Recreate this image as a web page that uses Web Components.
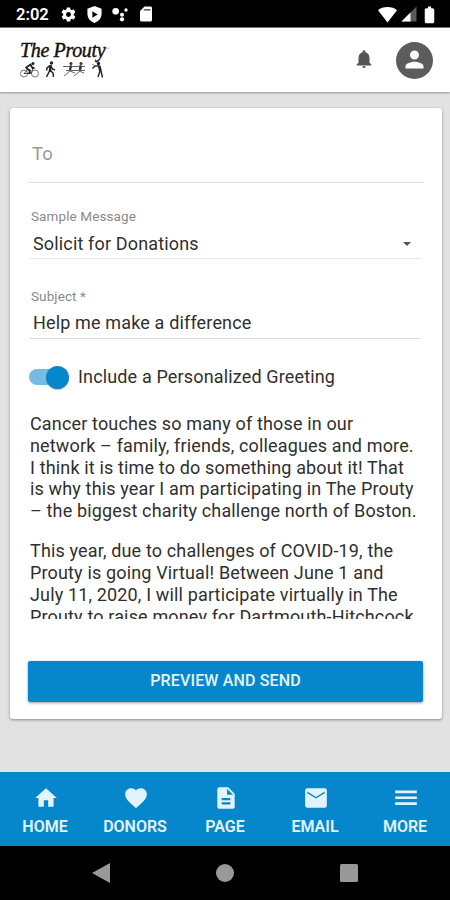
<!DOCTYPE html>
<html lang="en">
<head>
<meta charset="utf-8">
<title>The Prouty</title>
<style>
body {
  margin: 0;
  background: #e2e2e2;
  font-family: Roboto, "Liberation Sans", sans-serif;
  color: #2f2f2f;
}
</style>
</head>
<body>
<prouty-app>
  <status-bar slot="top" time="2:02"></status-bar>
  <app-header slot="top">The Prouty</app-header>

  <message-card>
    <form-field kind="empty">To</form-field>
    <form-field kind="select" label="Sample Message">Solicit for Donations</form-field>
    <form-field kind="input" label="Subject *">Help me make a difference</form-field>
    <toggle-switch>Include a Personalized Greeting</toggle-switch>
    <message-body>
      <p>Cancer touches so many of those in our<br>network – family, friends, colleagues and more.<br>I think it is time to do something about it! That<br>is why this year I am participating in The Prouty<br>– the biggest charity challenge north of Boston.</p>
      <p>This year, due to challenges of COVID-19, the<br>Prouty is going Virtual! Between June 1 and<br>July 11, 2020, I will participate virtually in The<br>Prouty to raise money for Dartmouth-Hitchcock</p>
    </message-body>
    <send-button>PREVIEW AND SEND</send-button>
  </message-card>

  <tab-bar slot="bottom">
    <tab-item icon="home">HOME</tab-item>
    <tab-item icon="heart">DONORS</tab-item>
    <tab-item icon="page">PAGE</tab-item>
    <tab-item icon="mail">EMAIL</tab-item>
    <tab-item icon="menu">MORE</tab-item>
  </tab-bar>
  <system-nav slot="bottom"></system-nav>
</prouty-app>

<script>
const icons = {
  gear: `<path d="M19.4 13a7.500 7.500 0 0 0 0-2l2.100-1.650a.5.5 0 0 0 .1-.640l-2-3.460a.5.5 0 0 0-.6-.220l-2.500 1a7.300 7.300 0 0 0-1.700-1l-.370-2.650A.5.5 0 0 0 14 2h-4a.5.5 0 0 0-.5.400L9.130 5.070a7.700 7.700 0 0 0-1.700 1l-2.480-1a.5.5 0 0 0-.6.220l-2 3.460a.5.5 0 0 0 .1.640L4.570 11a8 8 0 0 0 0 2l-2.100 1.650a.5.5 0 0 0-.1.640l2 3.460c.1.220.4.300.6.220l2.480-1c.5.400 1.100.700 1.700 1l.370 2.650c0 .2.200.4.500.4h4c.2 0 .4-.2.500-.4l.370-2.650a7.300 7.300 0 0 0 1.700-1l2.480 1c.2.100.5 0 .6-.220l2-3.460a.5.5 0 0 0-.1-.640zM12 15.500a3.500 3.500 0 1 1 0-7 3.500 3.500 0 0 1 0 7z"/>`,
  shield: `<path fill-rule="evenodd" d="M12 0 2 4v7c0 6 4.300 11 10 13 5.700-2 10-7 10-13V4zM9 7.500l7.500 4.500L9 16.500z"/>`,
  dots: `<circle cx="5.500" cy="8" r="5"/><circle cx="15" cy="13" r="3"/><circle cx="21" cy="6" r="2.500"/><circle cx="15" cy="20" r="3.200"/>`,
  sd: `<path d="M18 2h-8L4 8v12c0 1.100.9 2 2 2h12c1.100 0 2-.9 2-2V4c0-1.100-.9-2-2-2z"/><path d="M9 6.500h9" stroke="#000" stroke-width="1.300"/>`,
  wifi: `<path d="M12 22 0 6.500C3 4 7 2.500 12 2.500S21 4 24 6.500z"/>`,
  signal: `<path opacity=".35" d="M2 22h20V2z"/><path d="M2 22h12V10z"/>`,
  battery: `<path d="M15.700 4H14V2h-4v2H8.300C7 4 6 5 6 6.300v14.400C6 22 7 23 8.300 23h7.400c1.300 0 2.300-1 2.300-2.300V6.300C18 5 17 4 15.700 4z"/>`,
  bell: `<path d="M12 22a2 2 0 0 0 2-2h-4a2 2 0 0 0 2 2zm6-6v-5c0-3.070-1.640-5.640-4.500-6.320V4a1.500 1.500 0 0 0-3 0v.680C7.630 5.360 6 7.920 6 11v5l-2 2v1h16v-1z"/>`,
  person: `<path d="M12 12a4 4 0 1 0 0-8 4 4 0 0 0 0 8zm0 2c-2.670 0-8 1.340-8 4v2h16v-2c0-2.660-5.330-4-8-4z"/>`,
  home: `<path d="M10 20v-6h4v6h5v-8h3L12 3 2 12h3v8z"/>`,
  heart: `<path d="m12 21.350-1.450-1.320C5.400 15.360 2 12.280 2 8.500 2 5.420 4.420 3 7.500 3c1.740 0 3.410.810 4.500 2.090C13.090 3.810 14.760 3 16.500 3 19.580 3 22 5.420 22 8.500c0 3.780-3.400 6.860-8.550 11.540z"/>`,
  page: `<path d="M14 2H6a2 2 0 0 0-2 2v16c0 1.100.9 2 2 2h12a2 2 0 0 0 2-2V8zm2 16H8v-2h8zm0-4H8v-2h8zm-3-5V3.500L18.500 9z"/>`,
  mail: `<path d="M20 3H4a2 2 0 0 0-2 2v14c0 1.100.9 2 2 2h16a2 2 0 0 0 2-2V5a2 2 0 0 0-2-2zm0 4.500-8 5-8-5V6l8 5 8-5z"/>`,
  menu: `<path d="M2 5h20v2.500H2zm0 5.500h20V13H2zM2 16h20v2.500H2z"/>`,
};

const svg = (name, size) =>
  `<svg width="${size}" height="${size}" viewBox="0 0 24 24" fill="currentColor">${icons[name]}</svg>`;

// attaches an open root and fills it
const render = (el, html) => {
  el.attachShadow({ mode: "open" }).innerHTML = html;
};

class ProutyApp extends HTMLElement {
  constructor() {
    super();
    render(this, `
<style>
:host { display: flex; flex-direction: column; height: 900px; width: 450px; overflow: hidden; }
main { flex: 1; padding: 16px 8px 0 10px; }
</style>
<slot name="top"></slot>
<main><slot></slot></main>
<slot name="bottom"></slot>`);
  }
}

class StatusBar extends HTMLElement {
  connectedCallback() {
    render(this, `
<style>
:host { display: flex; justify-content: space-between; align-items: center; box-sizing: border-box; height: 28px; padding: 1px 11px 0 16px; background: #000; color: #fff; border-bottom: 1px solid #777; flex: none; }
div { display: flex; align-items: center; }
svg { display: block; }
.time { font-size: 16.500px; font-weight: 600; width: 32px; margin-right: 3px; white-space: nowrap; }
.left { gap: 9px; }
.right { gap: 2px; }
.right svg:first-child { margin-right: 1px; }
</style>
<div class="left"><span class="time">${this.getAttribute("time")}</span>${svg("gear", 17)}${svg("shield", 17)}${svg("dots", 16)}${svg("sd", 18)}</div>
<div class="right">${svg("wifi", 19)}${svg("signal", 18)}${svg("battery", 19)}</div>`);
  }
}

class AppHeader extends HTMLElement {
  constructor() {
    super();
    render(this, `
<style>
:host { display: flex; align-items: center; box-sizing: border-box; height: 64px; padding: 0 17px 0 20px; background: #fff; box-shadow: 0 1px 2px rgba(0, 0, 0, 0.35); position: relative; flex: none; }
.logo { flex: 1; color: #111; padding-bottom: 2px; }
.name { font: italic 400 20px/22px "Liberation Serif", serif; letter-spacing: -0.35px; white-space: nowrap; -webkit-text-stroke: 0.4px #111; }
sup { font: 4px "Liberation Sans"; color: #888; vertical-align: 7px; letter-spacing: 0; -webkit-text-stroke: 0; }
.sports { display: block; }
.bell { display: flex; color: #555; margin-right: 21px; margin-bottom: 2px; }
.avatar { display: flex; align-items: center; justify-content: center; width: 37px; height: 37px; border-radius: 50%; background: #5c5c5c; color: #fff; }
.avatar svg { margin-bottom: 2px; }
</style>
<div class="logo">
  <div class="name"><slot></slot><sup>™</sup></div>
  <svg class="sports" width="88" height="18" viewBox="0 0 88 18" fill="none" stroke="#222" stroke-width="1.300">
    <!-- cyclist -->
    <g><circle cx="4" cy="12.500" r="3.500" stroke="#555" stroke-width=".8"/><circle cx="15" cy="12.500" r="3.500" stroke="#555" stroke-width=".8"/><path d="m4 12.500 4-4 3 4H4m7 0 2-5" stroke-width=".8"/><path stroke-width="1.800" d="m5.500 7 5-3.500 2 3.500h2M6 7l4 2.500-1 3.500"/><circle cx="13" cy="2.500" r="1.500" fill="#222" stroke="none"/></g>
    <!-- walker -->
    <g><circle cx="31.500" cy="2" r="1.700" fill="#222" stroke="none"/><path stroke-width="2.400" d="m30.500 4-.5 6"/><path stroke-width="1.500" d="m30 9-3.500 7m3.500-7 3 3 .5 4M30 4.500 27 7l-.500 2.500M31 5l1.500 3 2.500 1"/></g>
    <!-- rowers -->
    <g stroke="#666" stroke-width="1"><circle cx="51" cy="2.500" r="1.500" fill="#333" stroke="none"/><circle cx="61" cy="2.500" r="1.500" fill="#333" stroke="none"/><path d="M43 5.500h22M46 9.500h19M51 4l-1 6 5 2m5-8-1 6 5 2M50 10l-6 5m16-5-6 5"/><path stroke="#333" stroke-width="2.300" d="m51 4.500-1 4.500m11-4.500L60 9"/></g>
    <!-- golfer -->
    <g><circle cx="78.500" cy="2.500" r="1.700" fill="#222" stroke="none"/><path stroke-width="2.800" d="m79 4.500 1.500 5.500"/><path stroke-width="1.400" d="m80 10-2 6M81 10l1.500 6.500M79 5l-4 0-2.500 2.500"/><path stroke="#777" stroke-width=".8" d="m72 3.500 6 2"/></g>
  </svg>
</div>
<div class="bell">${svg("bell", 22)}</div>
<div class="avatar">${svg("person", 27)}</div>`);
  }
}

class MessageCard extends HTMLElement {
  constructor() {
    super();
    render(this, `
<style>
:host { display: flex; flex-direction: column; box-sizing: border-box; height: 611px; padding: 0 19px 0 18px; background: #fff; border-radius: 3px; box-shadow: 0 1px 3px rgba(0, 0, 0, 0.4); }
</style>
<slot></slot>`);
  }
}

class FormField extends HTMLElement {
  connectedCallback() {
    const kind = this.getAttribute("kind");
    const label = this.getAttribute("label");
    render(this, `
<style>
:host { display: flex; flex-direction: column; box-sizing: border-box; white-space: nowrap; }
:host([kind="empty"]) { height: 75px; padding: 35px 0 0 4px; border-bottom: 1px solid #ddd; color: #999; margin-bottom: 24px; }
:host([kind="select"]), :host([kind="input"]) { height: 52px; margin: 0 2px 28px; border-bottom: 1px solid #e8e8e8; }
:host([kind="input"]) { border-color: #dadada; margin-bottom: 26px; }
label { font-size: 13.500px; line-height: 18px; color: #8a8a8a; padding-left: 1px; letter-spacing: 0.1px; }
.value { display: flex; align-items: center; justify-content: space-between; font-size: 18px; letter-spacing: 0.15px; line-height: 22px; padding: 7px 9px 0 3px; }
:host([kind="select"]) .value { padding-top: 8px; }
:host([kind="empty"]) .value { padding: 0; font-size: 18.500px; }
.caret { border: 4px solid transparent; border-top-color: #555; border-bottom: 0; margin-right: 1px; }
</style>
${label ? `<label>${label}</label>` : ""}
<div class="value"><span><slot></slot></span>${kind === "select" ? `<i class="caret"></i>` : ""}</div>`);
  }
}

class ToggleSwitch extends HTMLElement {
  constructor() {
    super();
    render(this, `
<style>
:host { display: flex; align-items: center; height: 24px; font-size: 18px; letter-spacing: 0.15px; white-space: nowrap; }
.track { display: flex; align-items: center; justify-content: flex-end; width: 36px; height: 16px; margin: 0 13px 0 1px; border-radius: 8px; background: #74bce3; }
.thumb { width: 23px; height: 23px; margin-right: -4px; border-radius: 50%; background: #0787cb; box-shadow: 0 1px 1px rgba(0, 0, 0, 0.2); flex: none; }
.text { padding-bottom: 2px; }
</style>
<span class="track"><span class="thumb"></span></span><span class="text"><slot></slot></span>`);
  }
}

class MessageBody extends HTMLElement {
  constructor() {
    super();
    render(this, `
<style>
:host { display: block; height: 206px; margin: 24px -10px 0 2px; overflow: hidden; font-size: 18px; letter-spacing: 0.15px; line-height: 21.750px; white-space: nowrap; }
::slotted(p) { margin: 0 0 18.500px; }
</style>
<slot></slot>`);
  }
}

class SendButton extends HTMLElement {
  constructor() {
    super();
    render(this, `
<style>
:host { display: flex; margin-top: 42px; }
button { flex: 1; height: 41px; padding: 0 0 2px; border: 0; border-radius: 2px; background: #0787cb; color: #e3f3fc; font: 500 16px Roboto, sans-serif; letter-spacing: 0.15px; box-shadow: 0 1px 3px rgba(0, 0, 0, 0.4); }
</style>
<button><slot></slot></button>`);
  }
}

class TabBar extends HTMLElement {
  constructor() {
    super();
    render(this, `
<style>
:host { display: grid; grid-template-columns: repeat(5, 1fr); height: 74px; background: #0787cb; color: #e3f3fc; flex: none; }
</style>
<slot></slot>`);
  }
}

class TabItem extends HTMLElement {
  connectedCallback() {
    render(this, `
<style>
:host { display: flex; flex-direction: column; align-items: center; padding-top: 13px; font-size: 16px; font-weight: 600; letter-spacing: 0; line-height: 20px; }
svg { display: block; margin: 0 0 6px 1px; }
</style>
${svg(this.getAttribute("icon"), 26)}<span><slot></slot></span>`);
  }
}

class SystemNav extends HTMLElement {
  constructor() {
    super();
    render(this, `
<style>
:host { display: flex; align-items: center; justify-content: center; gap: 106px; height: 54px; background: #000; flex: none; }
svg { display: block; }
</style>
<svg width="18" height="20" fill="#999"><path d="M0 10 18 0v20z"/></svg>
<svg width="18" height="18" fill="#999"><circle cx="9" cy="9" r="9"/></svg>
<svg width="18" height="18" fill="#999"><rect width="18" height="18" rx="1.500"/></svg>`);
  }
}

customElements.define("prouty-app", ProutyApp);
customElements.define("status-bar", StatusBar);
customElements.define("app-header", AppHeader);
customElements.define("message-card", MessageCard);
customElements.define("form-field", FormField);
customElements.define("toggle-switch", ToggleSwitch);
customElements.define("message-body", MessageBody);
customElements.define("send-button", SendButton);
customElements.define("tab-bar", TabBar);
customElements.define("tab-item", TabItem);
customElements.define("system-nav", SystemNav);
</script>
</body>
</html>
